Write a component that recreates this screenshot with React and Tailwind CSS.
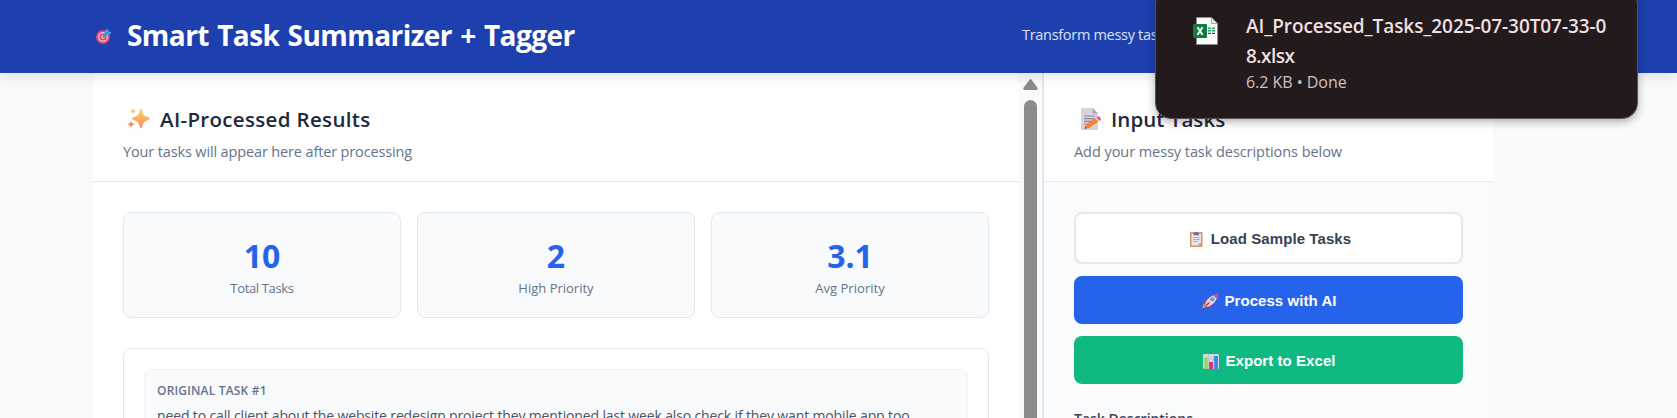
const TargetIcon = () => (
  <svg className="h-4 w-4 shrink-0" viewBox="0 0 16 16">
    <circle cx="7" cy="9" r="7" fill="#e0446c" />
    <circle cx="7" cy="9" r="5" fill="#d9c9dc" />
    <circle cx="7" cy="9" r="3.6" fill="#dc3c66" />
    <circle cx="7" cy="9" r="1.9" fill="#e3c6d8" />
    <path d="M7 9l4.6-4.6" stroke="#3b6f9e" strokeWidth="1.2" strokeLinecap="round" />
    <path d="M8.6 7.2l-.3-3.3L11.6.4l1 2.900 2.900 1-3.300 3.400z" fill="#3fa4f0" />
    <path d="M9.200 6.800l4-4" stroke="#2476c8" strokeWidth=".9" />
  </svg>
);

const SparklesIcon = () => (
  <svg className="h-[22px] w-[23px] shrink-0" viewBox="0 0 23 22">
    <defs>
      <linearGradient id="spark" x1="0" y1="0" x2="0" y2="1">
        <stop offset="0" stopColor="#fcd462" />
        <stop offset="1" stopColor="#fb8a57" />
      </linearGradient>
    </defs>
    <path d="M14 1c.7 0 .9.6 1.1 1.4 1.1 4.300 1.900 5.400 6.300 6.900.8.300 1.400.6 1.400 1.300s-.6 1-1.400 1.300c-4.400 1.500-5.200 2.600-6.300 6.900-.2.8-.4 1.400-1.100 1.400s-.9-.6-1.100-1.400c-1.100-4.300-1.900-5.400-6.300-6.900-.8-.3-1.400-.6-1.400-1.300s.6-1 1.400-1.300c4.400-1.500 5.200-2.600 6.300-6.900C13.100 1.600 13.300 1 14 1z" fill="url(#spark)" />
    <path d="M6 0c.7 2.200 1.100 2.600 3.200 3.300C7.100 4 6.700 4.400 6 6.600 5.300 4.400 4.900 4 2.800 3.300 4.900 2.600 5.300 2.200 6 0z" fill="#f9c766" />
    <path d="M4 12.200c.8 2.700 1.300 3.200 4 4-2.700.8-3.200 1.300-4 4-.8-2.700-1.300-3.200-4-4 2.700-.8 3.200-1.300 4-4z" fill="#f98f62" />
  </svg>
);

const MemoIcon = () => (
  <svg className="h-[22px] w-5 shrink-0" viewBox="0 0 20 22">
    <path d="M0 0h11.500L17 5.500V22H0z" fill="#d9d2e2" />
    <path d="M11.500 0L17 5.500h-5.500z" fill="#aaa2b6" />
    <path d="M3 8h11M3 10.700h10M3 13.400h8M3 16h4" stroke="#8f869d" strokeWidth="1.200" />
    <path d="M3.600 20.800l1.300-4.300 9.300-6.600 3 3.900-9.400 6.500z" fill="#fb7f35" />
    <path d="M14.200 9.900l1.600-1.100 3 3.900-1.600 1.100z" fill="#d5c8d3" />
    <path d="M15.600 8.900l1.500-.5c1.300-.3 3.300 2.300 2.600 3.500l-1 .9z" fill="#f5425a" />
    <path d="M3.600 20.800l.7-2.300 1.500 1.800z" fill="#51495b" />
  </svg>
);

const ClipboardIcon = () => (
  <svg className="h-[15px] w-[13px] shrink-0" viewBox="0 0 13 15">
    <rect width="12.500" height="15" rx="1" fill="#d89563" />
    <path d="M1.500 1.500H11V11l-2.500 2.500h-7z" fill="#e9e2f0" />
    <path d="M11 11l-2.500 2.500V11z" fill="#b9aec8" />
    <path d="M3.500 3.200V1.500c0-.6.500-1 1-1h.8C5.600-.2 7-.2 7.300.5H8c.600 0 1 .4 1 1v1.700z" fill="#766c85" />
    <path d="M3 5.500h6.700M3 7.500h6.700M3 9.500h5" stroke="#a89fb6" strokeWidth=".9" />
  </svg>
);

const RocketIcon = () => (
  <svg className="h-[15px] w-4 shrink-0" viewBox="0 0 16 15">
    <path d="M0 14.500l1.300-5 3.700 3.300z" fill="#fb8b24" />
    <path d="M2 8.300l3.800-4.200 2.300 1L4 10.300z" fill="#e83e63" />
    <path d="M6.500 14.500l5-4.500.200-3-6 4.700z" fill="#dc2c5c" />
    <path d="M3 10.400C5 4.700 9 1 15.600.2c-.3 6.200-4 10-9.800 12.700z" fill="#dcd4e4" />
    <path d="M11.400 1.500C12.700.8 14 .4 15.600.2c0 1.600-.4 3-1 4.200z" fill="#ef3d62" />
    <circle cx="10.300" cy="5.200" r="1.900" fill="#61809c" />
    <circle cx="10.300" cy="5.200" r="1.100" fill="#5db9ee" />
    <path d="M4.300 11.500l3-3" stroke="#b3315f" strokeWidth="1.300" />
  </svg>
);

const ChartIcon = () => (
  <svg className="h-[15px] w-4 shrink-0" viewBox="0 0 16 15">
    <rect width="16" height="15" rx="1.200" fill="#dcd5e5" />
    <path d="M5.500 0v15M10.500 0v15M0 5h16M0 10h16" stroke="#bdb3cb" strokeWidth=".6" />
    <rect x="1.300" y="3.500" width="3.500" height="11.500" fill="#8fdc5c" />
    <rect x="6.200" y="8" width="3.700" height="7" fill="#dd2c6c" />
    <rect x="11.200" y="2" width="3.700" height="13" fill="#2b8fe0" />
  </svg>
);

const ExcelIcon = () => (
  <svg className="h-7 w-[25px] shrink-0" viewBox="0 0 25 28">
    <path d="M3.500.5h15L24.500 6.500v21h-21z" fill="#fbfbfb" stroke="#8f8b8b" strokeWidth=".7" />
    <path d="M18.500.5v6h6z" fill="#e6e6e6" stroke="#8f8b8b" strokeWidth=".7" />
    <path d="M15 11.200h3M19 11.200h3" stroke="#33a56b" strokeWidth="1.500" />
    <path d="M15 13.700h3M19 13.700h3" stroke="#2f9e66" strokeWidth="1.500" />
    <path d="M15 16.300h3M19 16.300h3" stroke="#1d5c3c" strokeWidth="1.300" />
    <rect y="7" width="14" height="14" rx="1" fill="#107c41" />
    <path d="M4.500 10.300l5 7.400M9.500 10.300l-5 7.400" stroke="#fff" strokeWidth="1.900" />
  </svg>
);

function Stat({ value, label, labelClass }) {
  return (
    <div className="h-[106px] flex-1 rounded-lg border border-[#e2e8f0] bg-[#f8fafc] pt-[23px] text-center">
      <div className="text-[32px] leading-10 font-bold text-[#2563eb]">{value}</div>
      <div className={`mt-0.5 text-[13px] leading-5 text-[#64748b] ${labelClass}`}>{label}</div>
    </div>
  );
}

export default function App() {
  return (
    <div className="relative flex h-[418px] w-[1677px] flex-col overflow-hidden bg-[#f8fafc] font-['Open_Sans','Noto_Sans',sans-serif] whitespace-nowrap">
      <header className="z-10 flex h-[73px] shrink-0 items-center bg-[#1e40af] pb-[3px] pl-24 text-white shadow-[0_4px_12px_rgba(0,0,0,0.1)]">
        <div className="flex w-[926px] items-center gap-[15px]">
          <div className="pt-[1px]"><TargetIcon /></div>
          <h1 className="text-[28px] leading-10 font-bold tracking-[-0.55px] word-spacing-normal [word-spacing:1.5px]">Smart Task Summarizer + Tagger</h1>
        </div>
        <p className="text-[14.5px] leading-6 tracking-[-0.3px] text-[#dde2f3]">Transform messy tasks</p>
      </header>

      <main className="ml-[93px] flex w-[1400px] flex-1 overflow-hidden">
        <section className="flex h-[345px] w-[926px] flex-col bg-white">
          <div className="h-[109px] shrink-0 border-b border-[#e2e8f0] pt-[30px] pl-[30px]">
            <div className="flex h-8 items-center gap-[10px] pl-1">
              <SparklesIcon />
              <h2 className="text-[20.5px] leading-8 font-semibold tracking-[0.33px] text-[#1e293b]">AI-Processed Results</h2>
            </div>
            <p className="mt-[7px] text-[14.5px] leading-5 tracking-[-0.14px] text-[#64748b]">Your tasks will appear here after processing</p>
          </div>
          <div className="flex flex-col gap-[30px] px-[30px] pt-[30px]">
            <div className="flex gap-4">
              <Stat value="10" label="Total Tasks" labelClass="tracking-[-0.35px]" />
              <Stat value="2" label="High Priority" labelClass="tracking-[0px]" />
              <Stat value="3.1" label="Avg Priority" labelClass="tracking-[0.05px]" />
            </div>
            <div className="h-[200px] rounded-lg border border-[#e2e8f0] bg-white p-5">
              <div className="h-[120px] rounded-md border border-[#f1f5f9] bg-[#f8fafc] pt-[13px] pl-3">
                <div className="text-[12px] leading-4 font-semibold tracking-[0.18px] text-[#64748b]">ORIGINAL TASK #1</div>
                <p className="mt-[7px] text-[14px] leading-5 tracking-[-0.14px] text-[#475569]">
                  need to call client about the website redesign project they mentioned last week also check if they want mobile app too
                </p>
              </div>
            </div>
          </div>
        </section>

        <div className="flex w-[23px] flex-col items-center bg-[#fafafa] pt-[6px]">
          <svg className="h-[11px] w-[15px] shrink-0" viewBox="0 0 15 11">
            <path d="M6.300.9a1.500 1.500 0 0 1 2.400 0l5.800 7.800c.7 1 .1 2.300-1.100 2.300H1.600C.4 11-.2 9.700.5 8.700z" fill="#8b8b8b" />
          </svg>
          <div className="mt-[10px] h-[400px] w-[13px] shrink-0 rounded-t-full bg-[#8b8b8b]" />
        </div>

        <aside className="h-[345px] w-[451px] border-l-2 border-[#e2e8f0] bg-[#fafbfd]">
          <div className="h-[109px] border-b border-[#e2e8f0] bg-white pt-[30px] pl-[30px]">
            <div className="flex h-8 items-center gap-[10px] pl-[7px]">
              <MemoIcon />
              <h2 className="text-[20.5px] leading-8 font-semibold tracking-[0.05px] text-[#1e293b]">Input Tasks</h2>
            </div>
            <p className="mt-[7px] text-[14.5px] leading-5 tracking-[-0.06px] text-[#64748b]">Add your messy task descriptions below</p>
          </div>
          <div className="flex flex-col gap-3 px-[30px] pt-[30px] font-['Liberation_Sans',Arial,sans-serif] text-[15px] leading-5 font-bold">
            <button className="flex h-[52px] items-center justify-center gap-2 rounded-lg border-2 border-[#e5e7eb] bg-white pt-0.5 pl-1 tracking-[0.08px] text-[#374151]">
              <ClipboardIcon />Load Sample Tasks
            </button>
            <button className="flex h-12 items-center justify-center gap-[6px] rounded-lg bg-[#2563eb] pt-0.5 pl-0.5 tracking-[0.06px] text-white">
              <RocketIcon />Process with AI
            </button>
            <button className="flex h-12 items-center justify-center gap-[6px] rounded-lg bg-[#10b981] pt-0.5 pl-0.5 tracking-[0.06px] text-white">
              <ChartIcon />Export to Excel
            </button>
          </div>
          <div className="mt-[25px] pl-[30px] text-[14px] leading-5 font-semibold text-[#374151]">Task Descriptions</div>
        </aside>
      </main>

      <div className="absolute top-[-12px] left-[1155px] z-20 flex h-[131px] w-[483px] rounded-2xl border border-[#5b5152] bg-[#231a1b] pt-[22px] pl-[37px] shadow-[0_3px_8px_rgba(0,0,0,0.3)]">
        <div className="pt-[6px]"><ExcelIcon /></div>
        <div className="pl-[28px] text-[19px] leading-[30px] font-semibold text-[#efdfe1]">
          <div className="tracking-[-0.08px]">AI_Processed_Tasks_2025-07-30T07-33-0</div>
          <div className="tracking-[-0.5px]">8.xlsx</div>
          <div className="text-[16px] leading-[22px] font-normal tracking-[-0.04px] text-[#cfc1c3]">6.2 KB • Done</div>
        </div>
      </div>
    </div>
  );
}
